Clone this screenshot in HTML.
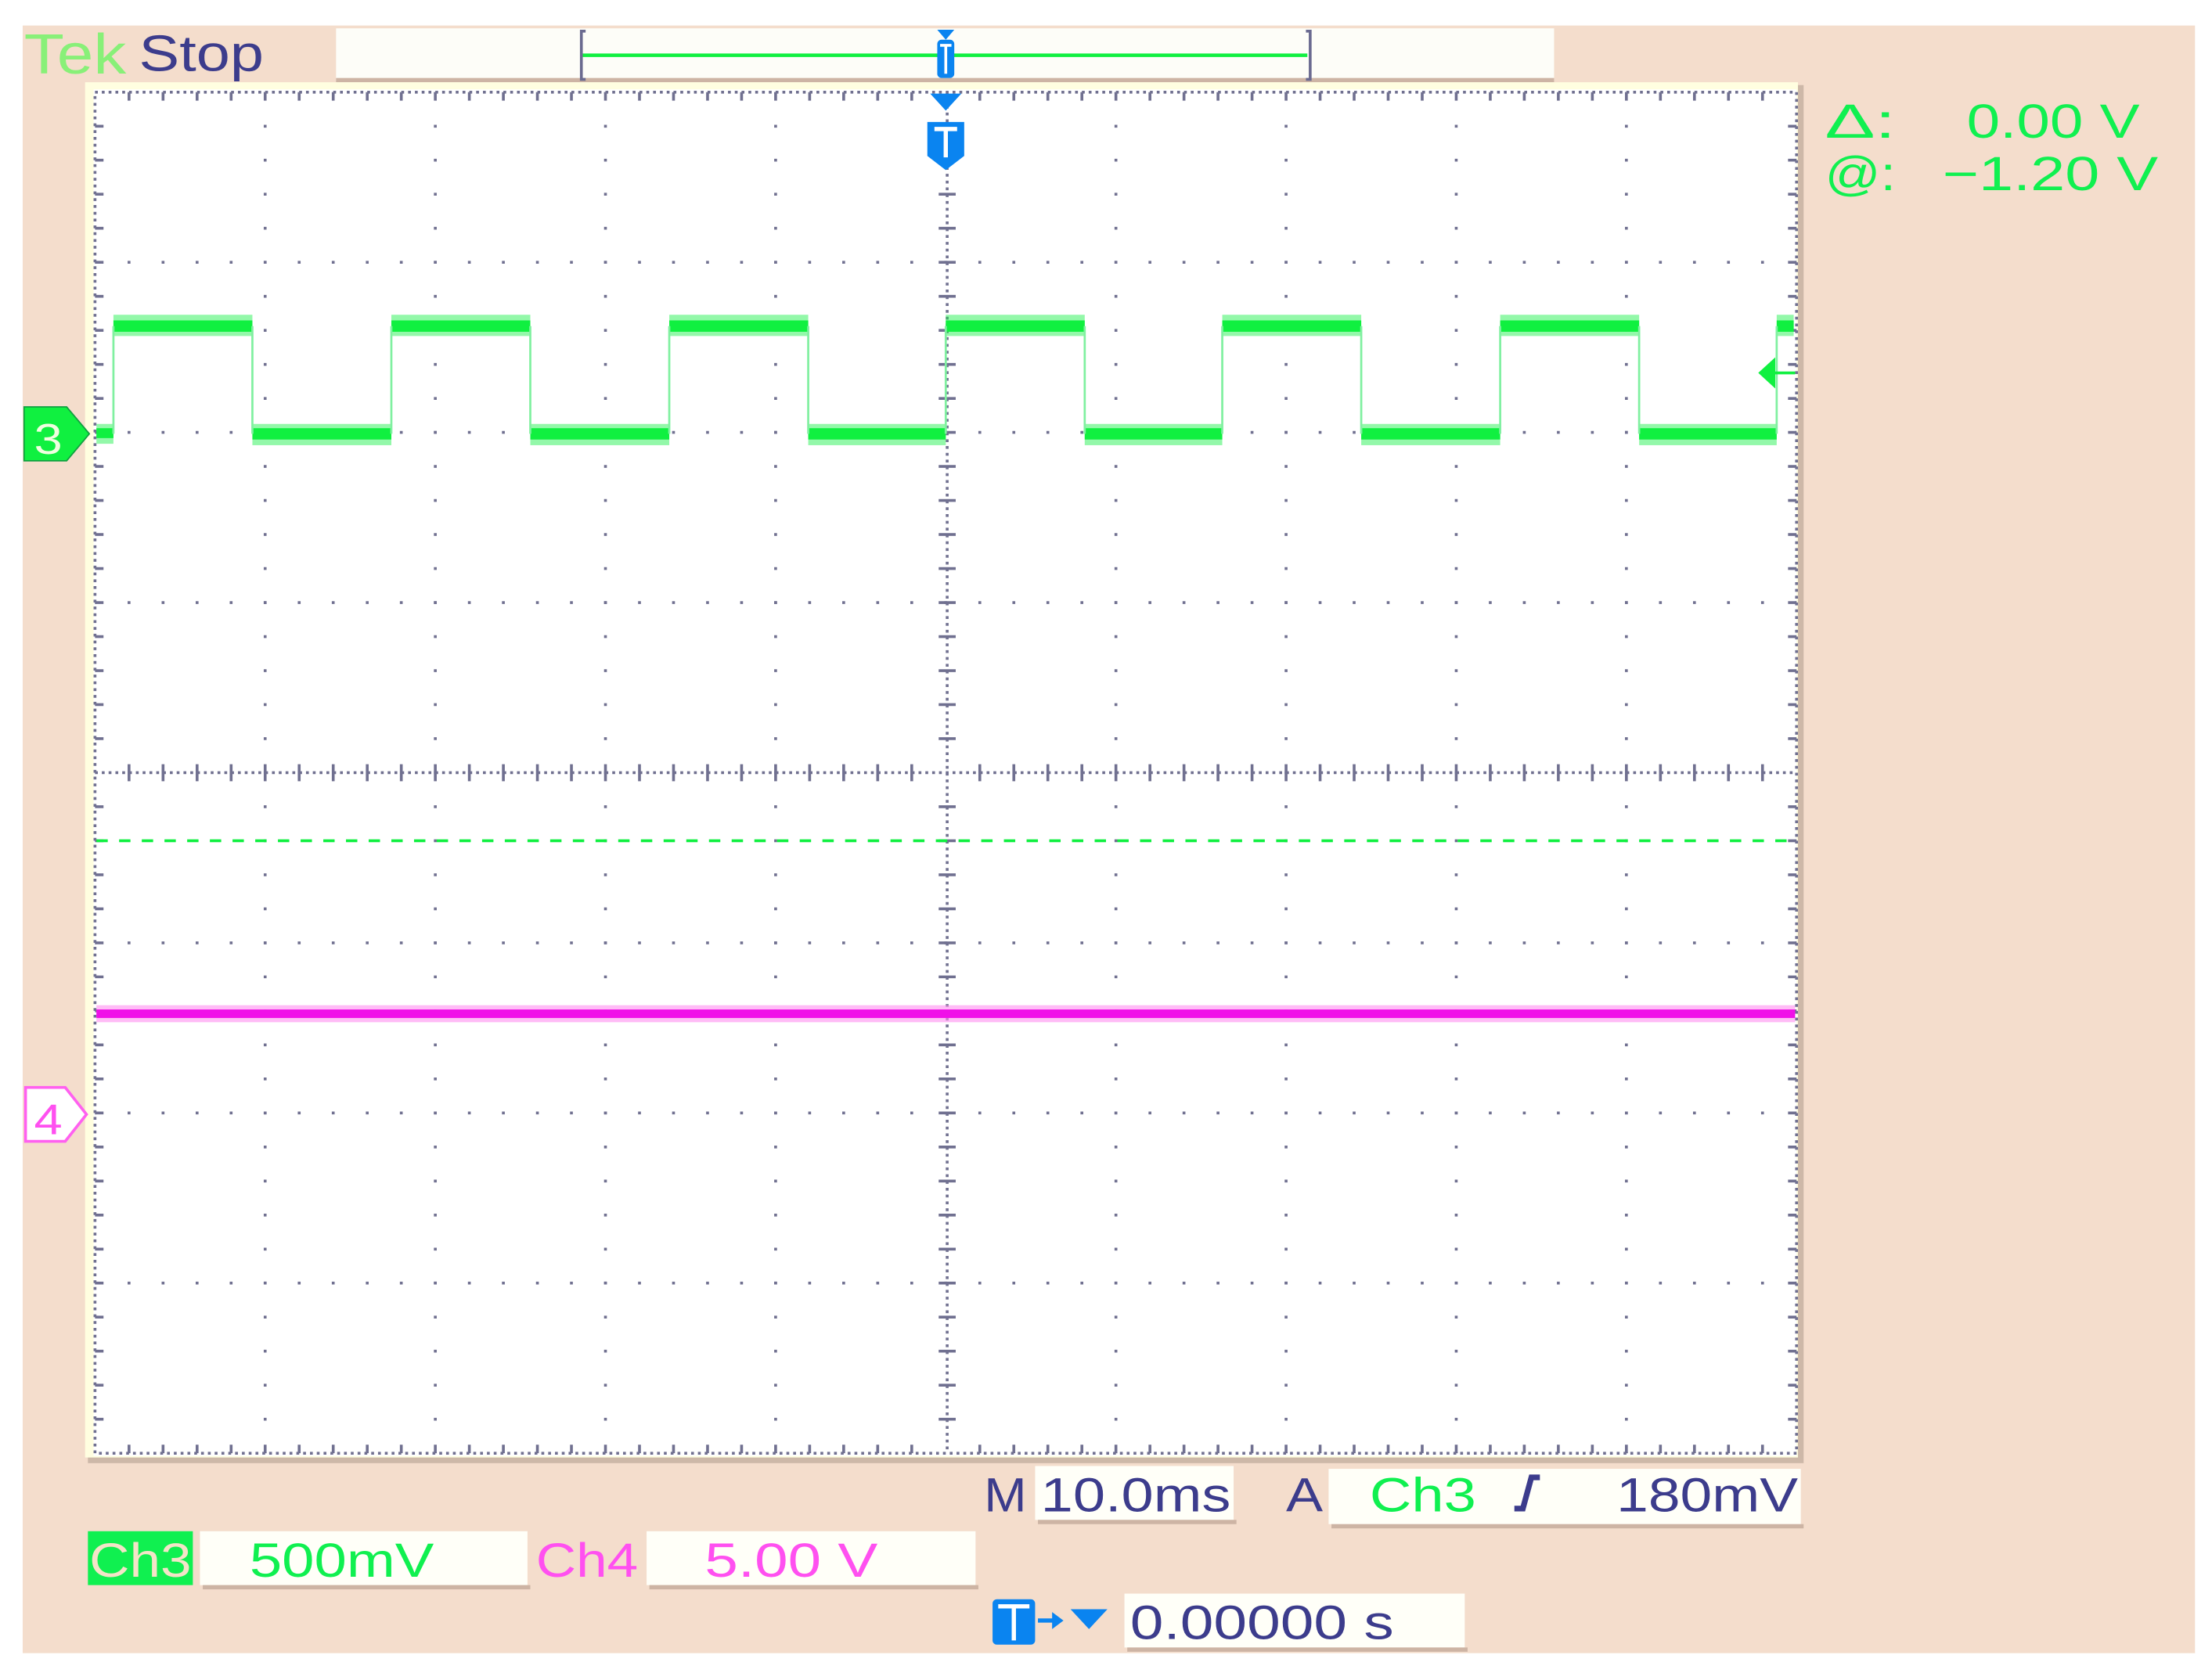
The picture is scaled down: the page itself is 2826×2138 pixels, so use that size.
<!DOCTYPE html>
<html><head><meta charset="utf-8"><style>html,body{margin:0;padding:0;background:#fff}svg{display:block}text{font-family:"Liberation Sans",sans-serif}</style></head>
<body>
<svg width="2826" height="2138" viewBox="0 0 1560 1180" preserveAspectRatio="none" xmlns="http://www.w3.org/2000/svg">
<rect x="0" y="0" width="1560" height="1180" fill="#fff"/>
<rect x="16" y="18" width="1532" height="1148" fill="#f4ddcc"/>
<!-- top bar -->
<text x="17" y="52" font-size="40" fill="#88f078" textLength="72" lengthAdjust="spacingAndGlyphs" font-family="Liberation Serif">Tek</text>
<text x="98" y="50" font-size="36" fill="#3c3c8c" textLength="88" lengthAdjust="spacingAndGlyphs">Stop</text>
<rect x="237" y="20" width="859" height="37" fill="#fdfdf8"/>
<rect x="237" y="55" width="859" height="3" fill="#cdb4a4"/>
<path d="M413 22 h-3 v34 h3 M921 22 h3 v34 h-3" stroke="#6a6a90" stroke-width="2" fill="none"/>
<line x1="411" y1="39" x2="922" y2="39" stroke="#10f040" stroke-width="2.5"/>
<path d="M661 21 h12 l-6 7 z" fill="#0a84f0"/>
<rect x="661" y="28" width="12" height="27" rx="3" fill="#0a84f0"/>
<path d="M663 32 h8 M667 32 v20" stroke="#fff" stroke-width="2"/>
<!-- grid frame -->
<rect x="62" y="60" width="1210" height="972" fill="#cdb8a8"/>
<rect x="60" y="58" width="1208" height="970" fill="#fffee0"/>
<rect x="66" y="63" width="1201" height="964" fill="#fff"/>
<g stroke="#707090" fill="none">
<!-- border dotted -->
<rect x="67" y="65" width="1200" height="960" stroke-width="2" stroke-dasharray="2 2.8"/>
<!-- grid lines -->
<g stroke-width="2" stroke-dasharray="2 22" stroke-dashoffset="1">
<line x1="67" y1="185" x2="1267" y2="185"/><line x1="67" y1="305" x2="1267" y2="305"/><line x1="67" y1="425" x2="1267" y2="425"/>
<line x1="67" y1="665" x2="1267" y2="665"/><line x1="67" y1="785" x2="1267" y2="785"/><line x1="67" y1="905" x2="1267" y2="905"/>
<line x1="187" y1="65" x2="187" y2="1025"/><line x1="307" y1="65" x2="307" y2="1025"/><line x1="427" y1="65" x2="427" y2="1025"/><line x1="547" y1="65" x2="547" y2="1025"/>
<line x1="787" y1="65" x2="787" y2="1025"/><line x1="907" y1="65" x2="907" y2="1025"/><line x1="1027" y1="65" x2="1027" y2="1025"/><line x1="1147" y1="65" x2="1147" y2="1025"/>
</g>
<!-- center lines -->
<line x1="67" y1="545" x2="1267" y2="545" stroke-width="2" stroke-dasharray="2 2.8"/>
<line x1="668" y1="65" x2="668" y2="1025" stroke-width="2" stroke-dasharray="2 2.8"/>
<!-- ticks on center horizontal -->
<path id="tk" d="" />
</g>
<g stroke="#707090" stroke-width="2">
<path d="M91 539v12M115 539v12M139 539v12M163 539v12M187 539v12M211 539v12M235 539v12M259 539v12M283 539v12M307 539v12M331 539v12M355 539v12M379 539v12M403 539v12M427 539v12M451 539v12M475 539v12M499 539v12M523 539v12M547 539v12M571 539v12M595 539v12M619 539v12M643 539v12M691 539v12M715 539v12M739 539v12M763 539v12M787 539v12M811 539v12M835 539v12M859 539v12M883 539v12M907 539v12M931 539v12M955 539v12M979 539v12M1003 539v12M1027 539v12M1051 539v12M1075 539v12M1099 539v12M1123 539v12M1147 539v12M1171 539v12M1195 539v12M1219 539v12M1243 539v12"/>
<path d="M662 89h12M662 113h12M662 137h12M662 161h12M662 185h12M662 209h12M662 233h12M662 257h12M662 281h12M662 305h12M662 329h12M662 353h12M662 377h12M662 401h12M662 425h12M662 449h12M662 473h12M662 497h12M662 521h12M662 569h12M662 593h12M662 617h12M662 641h12M662 665h12M662 689h12M662 713h12M662 737h12M662 761h12M662 785h12M662 809h12M662 833h12M662 857h12M662 881h12M662 905h12M662 929h12M662 953h12M662 977h12M662 1001h12"/>
<!-- border ticks -->
<path d="M91 65v6M115 65v6M139 65v6M163 65v6M187 65v6M211 65v6M235 65v6M259 65v6M283 65v6M307 65v6M331 65v6M355 65v6M379 65v6M403 65v6M427 65v6M451 65v6M475 65v6M499 65v6M523 65v6M547 65v6M571 65v6M595 65v6M619 65v6M643 65v6M691 65v6M715 65v6M739 65v6M763 65v6M787 65v6M811 65v6M835 65v6M859 65v6M883 65v6M907 65v6M931 65v6M955 65v6M979 65v6M1003 65v6M1027 65v6M1051 65v6M1075 65v6M1099 65v6M1123 65v6M1147 65v6M1171 65v6M1195 65v6M1219 65v6M1243 65v6"/>
<path d="M91 1025v-6M115 1025v-6M139 1025v-6M163 1025v-6M187 1025v-6M211 1025v-6M235 1025v-6M259 1025v-6M283 1025v-6M307 1025v-6M331 1025v-6M355 1025v-6M379 1025v-6M403 1025v-6M427 1025v-6M451 1025v-6M475 1025v-6M499 1025v-6M523 1025v-6M547 1025v-6M571 1025v-6M595 1025v-6M619 1025v-6M643 1025v-6M691 1025v-6M715 1025v-6M739 1025v-6M763 1025v-6M787 1025v-6M811 1025v-6M835 1025v-6M859 1025v-6M883 1025v-6M907 1025v-6M931 1025v-6M955 1025v-6M979 1025v-6M1003 1025v-6M1027 1025v-6M1051 1025v-6M1075 1025v-6M1099 1025v-6M1123 1025v-6M1147 1025v-6M1171 1025v-6M1195 1025v-6M1219 1025v-6M1243 1025v-6"/>
<path d="M67 89h6M67 113h6M67 137h6M67 161h6M67 185h6M67 209h6M67 233h6M67 257h6M67 281h6M67 305h6M67 329h6M67 353h6M67 377h6M67 401h6M67 425h6M67 449h6M67 473h6M67 497h6M67 521h6M67 569h6M67 593h6M67 617h6M67 641h6M67 665h6M67 689h6M67 713h6M67 737h6M67 761h6M67 785h6M67 809h6M67 833h6M67 857h6M67 881h6M67 905h6M67 929h6M67 953h6M67 977h6M67 1001h6"/>
<path d="M1267 89h-6M1267 113h-6M1267 137h-6M1267 161h-6M1267 185h-6M1267 209h-6M1267 233h-6M1267 257h-6M1267 281h-6M1267 305h-6M1267 329h-6M1267 353h-6M1267 377h-6M1267 401h-6M1267 425h-6M1267 449h-6M1267 473h-6M1267 497h-6M1267 521h-6M1267 569h-6M1267 593h-6M1267 617h-6M1267 641h-6M1267 665h-6M1267 689h-6M1267 713h-6M1267 737h-6M1267 761h-6M1267 785h-6M1267 809h-6M1267 833h-6M1267 857h-6M1267 881h-6M1267 905h-6M1267 929h-6M1267 953h-6M1267 977h-6M1267 1001h-6"/>
</g>
<!-- trigger T marker -->
<path d="M656 66 h22 l-11 12 z" fill="#0a84f0"/>
<path d="M654 86 h26 v24 l-13 10 l-13 -10 z" fill="#0a84f0"/>
<path d="M659 91 h16 M667 91 v20" stroke="#fff" stroke-width="3"/>
<!-- dashed green line -->
<line x1="68" y1="593" x2="1266" y2="593" stroke="#10f040" stroke-width="2" stroke-dasharray="8 8"/>
<!-- magenta trace -->
<rect x="68" y="709" width="1198" height="12" fill="#ff90f0" opacity="0.6"/>
<rect x="68" y="712" width="1198" height="6" fill="#f010e8"/>
<!-- square wave -->
<g fill="#10f040">
<g opacity="0.45">
<rect x="68" y="299" width="12" height="14"/>
<rect x="80" y="222" width="98" height="15"/><rect x="178" y="299" width="98" height="15"/>
<rect x="276" y="222" width="98" height="15"/><rect x="374" y="299" width="98" height="15"/>
<rect x="472" y="222" width="98" height="15"/><rect x="570" y="299" width="97" height="15"/>
<rect x="667" y="222" width="98" height="15"/><rect x="765" y="299" width="97" height="15"/>
<rect x="862" y="222" width="98" height="15"/><rect x="960" y="299" width="98" height="15"/>
<rect x="1058" y="222" width="98" height="15"/><rect x="1156" y="299" width="97" height="15"/>
<rect x="1253" y="222" width="12" height="15"/>
</g>
<rect x="68" y="302" width="12" height="7"/>
<rect x="80" y="226" width="98" height="8"/><rect x="178" y="302" width="98" height="8"/>
<rect x="276" y="226" width="98" height="8"/><rect x="374" y="302" width="98" height="8"/>
<rect x="472" y="226" width="98" height="8"/><rect x="570" y="302" width="97" height="8"/>
<rect x="667" y="226" width="98" height="8"/><rect x="765" y="302" width="97" height="8"/>
<rect x="862" y="226" width="98" height="8"/><rect x="960" y="302" width="98" height="8"/>
<rect x="1058" y="226" width="98" height="8"/><rect x="1156" y="302" width="97" height="8"/>
<rect x="1253" y="226" width="12" height="8"/>
</g>
<path d="M80 230V306M178 230V306M276 230V306M374 230V306M472 230V306M570 230V306M667 230V306M765 230V306M862 230V306M960 230V306M1058 230V306M1156 230V306M1253 230V306" stroke="#80f0a0" stroke-width="1.5"/>
<!-- trigger level arrow -->
<path d="M1240 263 l12 -11 v22 z" fill="#10f040"/>
<line x1="1250" y1="263" x2="1266" y2="263" stroke="#10f040" stroke-width="2"/>
<!-- channel markers -->
<path d="M17 287 h30 l16 19 l-16 19 h-30 z" fill="#10f040" stroke="#10a040" stroke-width="1"/>
<text x="24" y="320" font-size="30" fill="#f0ffe0" textLength="20" lengthAdjust="spacingAndGlyphs">3</text>
<path d="M18 767 h28 l15 19 l-15 19 h-28 z" fill="#fff" stroke="#ff60f0" stroke-width="2"/>
<text x="24" y="800" font-size="30" fill="#ff50f0" textLength="20" lengthAdjust="spacingAndGlyphs">4</text>
<!-- right readouts -->
<g fill="#10f050" font-size="34">
<text x="1287" y="97" textLength="50" lengthAdjust="spacingAndGlyphs">Δ:</text>
<text x="1387" y="97" textLength="122" lengthAdjust="spacingAndGlyphs">0.00 V</text>
<text x="1287" y="134" textLength="50" lengthAdjust="spacingAndGlyphs">@:</text>
<text x="1370" y="134" textLength="152" lengthAdjust="spacingAndGlyphs">−1.20 V</text>
</g>
<!-- bottom row 1 -->
<rect x="730" y="1034" width="140" height="38" fill="#fffff8"/><rect x="732" y="1072" width="140" height="3" fill="#cdb4a4"/>
<text x="694" y="1066" font-size="34" fill="#3c3c8c" textLength="30" lengthAdjust="spacingAndGlyphs">M</text>
<text x="734" y="1066" font-size="34" fill="#3c3c8c" textLength="134" lengthAdjust="spacingAndGlyphs">10.0ms</text>
<text x="907" y="1066" font-size="34" fill="#3c3c8c" textLength="26" lengthAdjust="spacingAndGlyphs">A</text>
<rect x="937" y="1036" width="333" height="39" fill="#fffff8"/><rect x="939" y="1075" width="333" height="3" fill="#cdb4a4"/>
<text x="966" y="1066" font-size="34" fill="#10f050" textLength="75" lengthAdjust="spacingAndGlyphs">Ch3</text>
<path d="M1068 1064 h6 l6 -22 h6" stroke="#3c3c8c" stroke-width="4" fill="none"/>
<text x="1140" y="1066" font-size="34" fill="#3c3c8c" textLength="128" lengthAdjust="spacingAndGlyphs">180mV</text>
<!-- bottom row 2 -->
<rect x="62" y="1080" width="74" height="38" fill="#10f050"/>
<text x="63" y="1112" font-size="34" fill="#f4e4c8" textLength="72" lengthAdjust="spacingAndGlyphs">Ch3</text>
<rect x="141" y="1080" width="231" height="38" fill="#fffff8"/><rect x="143" y="1118" width="231" height="3" fill="#cdb4a4"/>
<text x="176" y="1112" font-size="34" fill="#10f050" textLength="130" lengthAdjust="spacingAndGlyphs">500mV</text>
<text x="378" y="1112" font-size="34" fill="#ff50f0" textLength="72" lengthAdjust="spacingAndGlyphs">Ch4</text>
<rect x="456" y="1080" width="232" height="38" fill="#fffff8"/><rect x="458" y="1118" width="232" height="3" fill="#cdb4a4"/>
<text x="497" y="1112" font-size="34" fill="#ff50f0" textLength="122" lengthAdjust="spacingAndGlyphs">5.00 V</text>
<!-- bottom row 3 -->
<rect x="700" y="1128" width="30" height="32" rx="3" fill="#0a84f0"/>
<path d="M704 1133 h22 M715 1133 v24" stroke="#fff" stroke-width="3"/>
<path d="M732 1143 h12" stroke="#0a84f0" stroke-width="3"/><path d="M742 1137 l8 6 l-8 6 z" fill="#0a84f0"/>
<path d="M755 1135 h26 l-13 14 z" fill="#0a84f0"/>
<rect x="793" y="1124" width="240" height="38" fill="#fffff8"/><rect x="795" y="1162" width="240" height="3" fill="#cdb4a4"/>
<text x="797" y="1156" font-size="34" fill="#3c3c8c" textLength="186" lengthAdjust="spacingAndGlyphs">0.00000 s</text>
</svg>
</body></html>
